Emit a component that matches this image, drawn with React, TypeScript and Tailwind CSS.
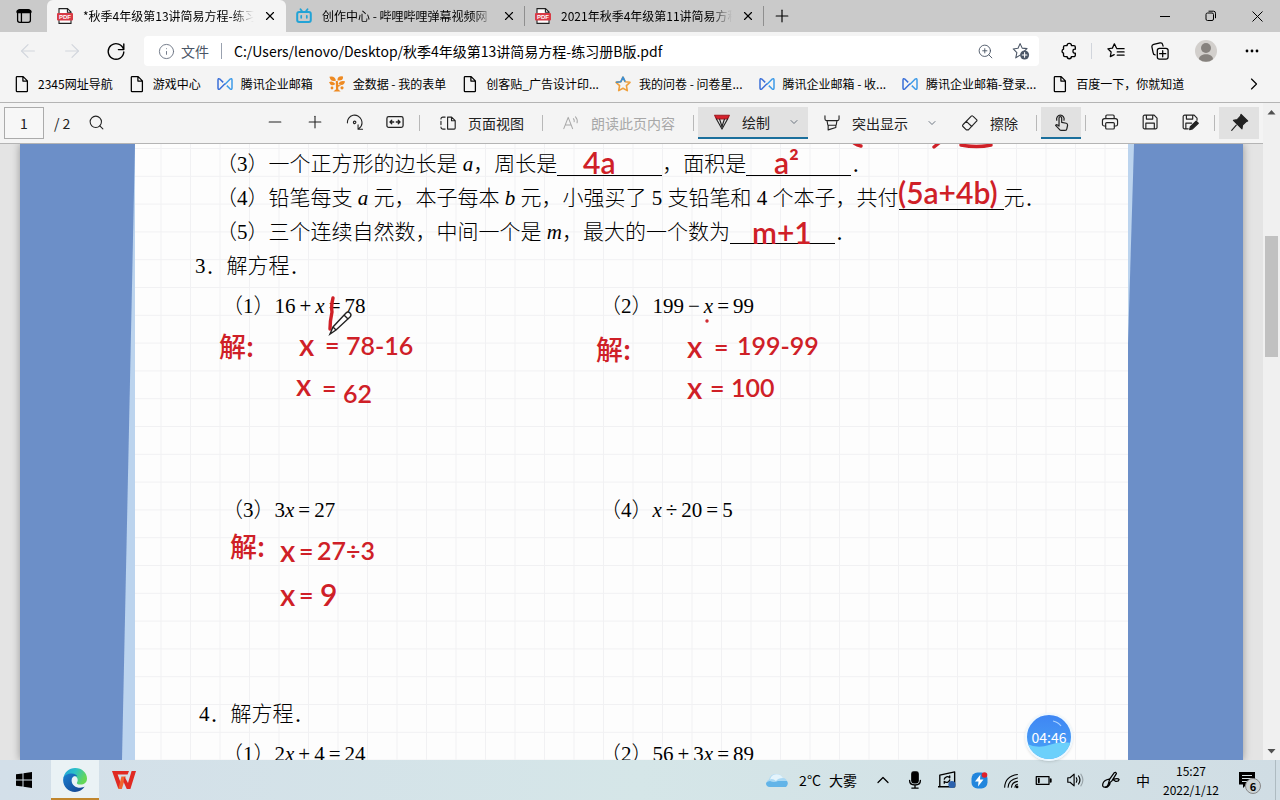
import { ReactNode } from "react";
import {
  ArrowLeft,
  ArrowRight,
  ChevronDown,
  ChevronRight,
  ChevronUp,
  Info,
  Minus,
  Plus,
  Search,
  X,
  ZoomIn,
} from "lucide-react";

type IconProps = { size?: number; className?: string; children?: ReactNode; width?: number };

const Line = ({ size = 18, className = "", width = 1.2, children }: IconProps) => (
  <svg
    width={size}
    height={size}
    viewBox="0 0 20 20"
    fill="none"
    stroke="currentColor"
    strokeWidth={width}
    strokeLinecap="round"
    strokeLinejoin="round"
    className={`shrink-0 ${className}`}
    aria-hidden="true"
  >
    {children}
  </svg>
);

const PdfIcon = () => (
  <svg width="16" height="16" viewBox="0 0 16 16" className="shrink-0" aria-hidden="true">
    <path d="M2 .6h8.5L14 4v11.4H2z" fill="#fff" stroke="#222" strokeWidth="1.1" />
    <path d="M10.4.6V4.2H14" fill="none" stroke="#222" strokeWidth="1.1" />
    <rect x="0" y="5" width="16" height="7.4" rx="1" fill="#d83b46" />
    <text x="8" y="10.9" fontSize="6" fontWeight="700" textAnchor="middle" fill="#fff" fontFamily="Liberation Sans, sans-serif">PDF</text>
  </svg>
);

const BiliIcon = () => (
  <svg width="16" height="16" viewBox="0 0 16 16" className="shrink-0" fill="none" stroke="#22a3d6" strokeLinecap="round" aria-hidden="true">
    <rect x="1.2" y="4" width="13.6" height="10" rx="2" strokeWidth="2" />
    <path d="M4.5 1.2 6 3.2M11.5 1.2 10 3.2" strokeWidth="1.8" />
    <path d="M5.2 7.8v2M10.8 7.8v2" strokeWidth="1.7" />
  </svg>
);

const FileIcon = () => (
  <Line size={18} width={1.4} className="-mx-px">
    <path d="M4.5 1.8h6.8L16 6.5v11.2a.8.8 0 0 1-.8.8H4.5a.8.8 0 0 1-.8-.8V2.6a.8.8 0 0 1 .8-.8ZM11 2v4.8h5" />
  </Line>
);

const TencentIcon = () => (
  <svg width="16" height="16" viewBox="0 0 16 16" className="shrink-0" fill="none" strokeWidth="1.5" strokeLinejoin="round" aria-hidden="true">
    <path d="M8 8.200 13 3.200q2-1.200 2 .8v8q0 2-2 .8L9.800 9.600" stroke="#3e9be8" />
    <path d="M8 7.800 3 12.800q-2 1.200-2-.8V4q0-2 2-.8l3.200 3.200" stroke="#3a6fd8" />
  </svg>
);

const TreeIcon = () => (
  <svg width="16" height="16" viewBox="0 0 16 16" className="shrink-0" fill="#ee8a22" aria-hidden="true">
    <path d="M.4.8Q5.600-.6 7 4.400 1.800 6.600.4.800ZM8.400 4.400Q8.400-.4 14 .4 14.600 5.400 8.400 4.400ZM0 6.200Q3.400 4 6.400 8 2.200 11.200 0 6.200ZM9.400 8Q11 4 16 5.200 15 11 9.400 8ZM6.800 5h2l.4 4 3 .6-3 1.200v2.400l2.400 2.400H4.400l2.600-2.400z" />
    <circle cx="13" cy="11.8" r="1.6" />
    <circle cx="3" cy="12" r="1.4" />
  </svg>
);

const StarIcon = () => (
  <svg width="16" height="16" viewBox="0 0 16 16" className="shrink-0" fill="none" strokeWidth="1.6" strokeLinejoin="round" aria-hidden="true">
    <path d="m8 1.2 2.1 4.5 4.9.6-3.6 3.4.9 4.9L8 12.2l-4.3 2.4.9-4.9L1 6.3l4.9-.6z" stroke="#f0a03c" />
    <path d="m1 6.3 4.9-.6L8 1.2l2.1 4.5" stroke="#3c8fd4" />
  </svg>
);

const RefreshIcon = () => (
  <Line size={20} width={1.4}>
    <path d="M17.6 8.6A7.8 7.8 0 1 0 17.8 11M17.8 3v5.6h-5.4" />
  </Line>
);

const StarAddIcon = () => (
  <Line size={18} className="text-gray-600">
    <path d="m9 1.8 2.3 5 5.4.6-3 2.8M9 14.6 4.2 17.6l1.2-5.9-4-4 5.3-.7L9 1.8" />
    <circle cx="14" cy="14.4" r="5" fill="currentColor" stroke="none" />
    <path d="M14 11.8V17M11.4 14.4h5.2" stroke="#fff" />
  </Line>
);

const PuzzleIcon = () => (
  <Line size={18} width={1.5}>
    <path d="M5.500 4h2.400a2.400 2.400 0 0 1 4.800 0H15.400A1.600 1.600 0 0 1 17 5.600V8q-2.600-.2-2.600 2.200T17 12.400v2.200a1.600 1.600 0 0 1-1.600 1.600h-2.700a2.400 2.400 0 0 1-4.800 0H5.500a1.600 1.600 0 0 1-1.600-1.600v-2.200a2.300 2.300 0 0 1 0-4.400V5.600A1.600 1.600 0 0 1 5.500 4Z" />
  </Line>
);

const FavoritesIcon = () => (
  <Line size={18} width={1.4}>
    <path d="M10.5 6.6 8.2 2 6 6.8l-5 .7 3.6 3.6-.9 5.2L8 14M11 7.4h8M11.4 11h7.6M11.4 14.6h7.6" />
  </Line>
);

const CollectionsIcon = () => (
  <Line size={18} width={1.4}>
    <rect x="7" y="7" width="12" height="12" rx="2.4" />
    <path d="M13 9.6v6.8M9.6 13h6.8M4.6 14.4A2.4 2.4 0 0 1 2.4 12L1 5.4A2.6 2.6 0 0 1 3 2.6L10 1a2.6 2.6 0 0 1 3 2l.4 1.600" />
  </Line>
);

const favorites: { label: string; icon: ReactNode }[] = [
  { label: "2345网址导航", icon: <FileIcon /> },
  { label: "游戏中心", icon: <FileIcon /> },
  { label: "腾讯企业邮箱", icon: <TencentIcon /> },
  { label: "金数据 - 我的表单", icon: <TreeIcon /> },
  { label: "创客贴_广告设计印...", icon: <FileIcon /> },
  { label: "我的问卷 - 问卷星...", icon: <StarIcon /> },
  { label: "腾讯企业邮箱 - 收...", icon: <TencentIcon /> },
  { label: "腾讯企业邮箱-登录...", icon: <TencentIcon /> },
  { label: "百度一下，你就知道", icon: <FileIcon /> },
];

const Tab = ({ title, icon, active = false }: { title: string; icon: ReactNode; active?: boolean }) => (
  <div
    role="tab"
    aria-selected={active}
    className={`relative flex w-[239px] min-w-0 items-center gap-2 pl-2.5 pr-2 ${active ? "rounded-t-md bg-[#f4f4f4]" : ""}`}
  >
    {icon}
    <span className="min-w-0 flex-1 overflow-hidden whitespace-nowrap pl-0.5 text-xs [mask-image:linear-gradient(to_right,black_88%,transparent)]">
      {title}
    </span>
    <button aria-label="关闭" className="flex size-4 items-center justify-center">
      <X size={14} strokeWidth={2} />
    </button>
    {!active && <span className="absolute right-0 top-1.5 h-5 w-px bg-[#8f8f8f]" />}
  </div>
);

const TitleBar = () => (
  <div className="flex h-8 shrink-0 bg-[#cacaca]">
    <button aria-label="标签页操作" className="flex w-[47px] shrink-0 items-center justify-center">
      <Line size={16} width={1.6}>
        <rect x="2" y="2" width="16" height="16" rx="2.6" />
        <path d="M2.4 4.6h15.2" strokeWidth="4" />
        <path d="M6.8 6v12" />
      </Line>
    </button>
    <div role="tablist" className="flex min-w-0">
      <Tab active title="*秋季4年级第13讲简易方程-练习" icon={<PdfIcon />} />
      <Tab title="创作中心 - 哔哩哔哩弹幕视频网" icon={<BiliIcon />} />
      <Tab title="2021年秋季4年级第11讲简易方程" icon={<PdfIcon />} />
    </div>
    <button aria-label="新建标签页" className="flex w-9 items-center justify-center">
      <Plus size={20} strokeWidth={1.4} />
    </button>
    <div className="ml-auto flex">
      <button aria-label="最小化" className="flex w-[46px] items-center justify-center">
        <svg width="10" height="10" stroke="black"><path d="M0 5.5h10" /></svg>
      </button>
      <button aria-label="还原" className="flex w-[46px] items-center justify-center">
        <svg width="12" height="12" fill="none" stroke="black">
          <rect x="1" y="3" width="7.5" height="7.5" rx="1.5" />
          <path d="M3.5 1.2h5a2 2 0 0 1 2 2v5" />
        </svg>
      </button>
      <button aria-label="关闭窗口" className="flex w-[46px] items-center justify-center">
        <svg width="11" height="11" stroke="black"><path d="m.5.5 10 10m0-10-10 10" /></svg>
      </button>
    </div>
  </div>
);

const AddressBar = () => (
  <div className="flex h-[38px] shrink-0 items-center bg-[#f4f4f4] pl-1.5">
    <button aria-label="后退" className="flex w-11 justify-center text-gray-300">
      <ArrowLeft size={22} strokeWidth={1.2} />
    </button>
    <button aria-label="前进" className="flex w-11 justify-center text-gray-300">
      <ArrowRight size={22} strokeWidth={1.2} />
    </button>
    <button aria-label="刷新" className="flex w-11 justify-center">
      <RefreshIcon />
    </button>
    <div className="ml-1.5 flex h-[30px] min-w-0 flex-1 items-center rounded bg-white pl-3.5">
      <Info size={17} strokeWidth={1.3} className="shrink-0 text-gray-500" />
      <label htmlFor="url" className="ml-1.5 shrink-0 text-sm text-gray-600">文件</label>
      <span className="mx-3 h-4 w-px bg-gray-400" />
      <input
        id="url"
        className="min-w-0 flex-1 text-sm outline-none"
        defaultValue="C:/Users/lenovo/Desktop/秋季4年级第13讲简易方程-练习册B版.pdf"
      />
      <button aria-label="缩放" className="flex w-9 justify-center text-gray-600">
        <ZoomIn size={17} strokeWidth={1.3} />
      </button>
      <button aria-label="添加到收藏夹" className="flex w-9 justify-center">
        <StarAddIcon />
      </button>
    </div>
    <div className="flex items-center pl-2">
      <button aria-label="扩展" className="flex w-11 justify-center"><PuzzleIcon /></button>
      <span className="h-4 w-px bg-gray-300" />
      <button aria-label="收藏夹" className="flex w-12 justify-center"><FavoritesIcon /></button>
      <button aria-label="集锦" className="flex w-10 justify-center"><CollectionsIcon /></button>
      <button aria-label="个人资料" className="flex w-[52px] justify-center">
        <svg width="22" height="22" viewBox="0 0 22 22">
          <circle cx="11" cy="11" r="11" fill="#d2cfcc" />
          <circle cx="11" cy="8" r="5" fill="#86827e" />
          <path d="M4 19.2c0-6.6 14-6.6 14 0a11 11 0 0 1-14 0Z" fill="#86827e" />
        </svg>
      </button>
      <button aria-label="更多" className="flex w-10 justify-center">
        <svg width="14" height="4"><circle cx="2" cy="2" r="1.4" /><circle cx="7" cy="2" r="1.4" /><circle cx="12" cy="2" r="1.4" /></svg>
      </button>
      <span className="w-2" />
    </div>
  </div>
);

const FavoritesBar = () => (
  <nav className="flex h-[33px] shrink-0 items-center gap-4 border-b border-[#b4b4b4] bg-[#f4f4f4] pb-1 pl-3.5 pr-4 text-xs">
    {favorites.map((item, index) => (
      <a key={index} href="#" className="flex items-center gap-2 whitespace-nowrap">
        {item.icon}
        {item.label}
      </a>
    ))}
    <button aria-label="更多收藏" className="ml-auto">
      <ChevronRight size={20} strokeWidth={1.4} />
    </button>
  </nav>
);

const Divider = () => <span className="mx-1 h-4 w-px shrink-0 bg-[#b8b8b8]" />;

const IconButton = ({ label, pressed = false, shaded = false, children }: { label: string; pressed?: boolean; shaded?: boolean; children: ReactNode }) => (
  <button
    aria-label={label}
    className={`flex h-8 w-10 shrink-0 items-center justify-center border-b-2 ${pressed ? "border-[#1b6f9c] bg-[#e1e1e1]" : shaded ? "border-[#e1e1e1] bg-[#e1e1e1]" : "border-transparent"}`}
  >
    {children}
  </button>
);

const TextButton = ({ icon, label, disabled = false, split = false }: { icon: ReactNode; label: string; disabled?: boolean; split?: boolean }) => (
  <button
    disabled={disabled}
    className={`flex h-full shrink-0 items-center gap-3 whitespace-nowrap pl-4 text-sm ${split ? "pr-2.5" : "pr-3.5"} ${disabled ? "text-[#a8a8a8]" : ""}`}
  >
    {icon}
    {label}
  </button>
);

const MoreButton = ({ label }: { label: string }) => (
  <button aria-label={label} className="flex h-full w-7 items-center justify-center">
    <ChevronDown size={12} strokeWidth={1.6} className="text-gray-600" />
  </button>
);

const PdfToolbar = () => (
  <div className="flex h-[41px] shrink-0 items-center border-b border-[#b4b4b4] bg-[#f4f4f4] pl-1 pr-1 text-[#222]">
    <input
      aria-label="页码"
      defaultValue="1"
      className="h-8 w-10 border border-[#ababab] bg-[#f7f7f7] text-center text-sm outline-none"
    />
    <span className="ml-2.5 w-[22px] whitespace-nowrap text-sm">/ 2</span>
    <IconButton label="查找">
      <Search size={17} strokeWidth={1.5} />
    </IconButton>
    <div className="ml-auto flex h-8 items-center">
      <IconButton label="缩小"><Minus size={20} strokeWidth={1.3} /></IconButton>
      <IconButton label="放大"><Plus size={20} strokeWidth={1.3} /></IconButton>
      <IconButton label="旋转">
        <Line size={18}>
          <path d="M1.6 11A8 8 0 0 1 17 7.4c1.6 4 .2 7.8-2.8 10M13.4 13.2v4.9h5" />
          <circle cx="9.6" cy="10.4" r="1.4" />
        </Line>
      </IconButton>
      <IconButton label="适应宽度">
        <Line size={18} width={1.4}>
          <rect x="1" y="4" width="18" height="12" rx="2" />
          <path d="M4.6 10h4M6.4 8l-2 2 2 2M15.4 10h-4M13.6 8l2 2-2 2" />
        </Line>
      </IconButton>
      <Divider />
      <TextButton
        label="页面视图"
        icon={
          <Line size={16} width={1.4}>
            <path d="M9.5 2.6h5L19 7v9.4a1.2 1.2 0 0 1-1.2 1.2H9.5zM14.4 2.8V7.2H19" />
            <path d="M6.4 2.6H3.6a2.4 2.4 0 0 0-2.4 2.4M1.2 8v4M1.2 15.2a2.4 2.4 0 0 0 2.4 2.4h2.8" />
          </Line>
        }
      />
      <Divider />
      <TextButton
        disabled
        label="朗读此页内容"
        icon={
          <Line size={16} width={1.3}>
            <path d="M1 17 6.5 3 12 17M3 12.4h7M13 4.6q1.4 1.6 1 3.8M15.6 2.4q3 3 2 7.4" />
          </Line>
        }
      />
      <Divider />
      <div className="flex h-8 border-b-2 border-[#1b6f9c] bg-[#e1e1e1]">
        <TextButton
          split
          label="绘制"
          icon={
            <Line size={16} width={1.4}>
              <path d="M.8 1.600h18.400l-2.200 4.600H3z" fill="#d6202b" stroke="#a01820" />
              <path d="m3 6.200 7 12.600 7-12.600M7 6.600l3 9 3-9" />
            </Line>
          }
        />
        <MoreButton label="画笔选项" />
      </div>
      <div className="flex h-8">
        <TextButton
          split
          label="突出显示"
          icon={
            <Line size={16} width={1.4}>
              <path d="M1.200 1v4q0 2 2 2h13.600q2 0 2-2V1M3.800 7.2l1 5.600h10.400l1-5.600M5.2 12.800v5.800l9.6-3v-2.800" />
            </Line>
          }
        />
        <MoreButton label="荧光笔选项" />
      </div>
      <TextButton
        label="擦除"
        icon={
          <Line size={16} width={1.4}>
            <path d="m1.200 12.200 10.400-10.800q1-1 2 0l4.600 4.400q1 1 0 2L8 18.600H5.400L1.200 14.400q-1-1 0-2.200ZM5.400 8l6.800 6.400" />
          </Line>
        }
      />
      <Divider />
      <IconButton pressed label="触摸绘制">
        <Line size={19} width={1.3}>
          <path d="M7.4 11.4V5.2a1.4 1.4 0 0 1 2.8 0v4.6l4.8 1q1.6.4 1.4 2.2l-.8 3.6q-.4 1.8-2.4 1.8H9.8q-1.2 0-2-1.2L3.8 13q1.2-1.6 3.6.8z" />
          <path d="M5 7.6a4 4 0 1 1 7.6 0" />
        </Line>
      </IconButton>
      <Divider />
      <IconButton label="打印">
        <Line size={18} width={1.3}>
          <path d="M5.4 6.2V3.4A1.2 1.2 0 0 1 6.6 2.2h6.8a1.2 1.2 0 0 1 1.2 1.2v2.8M5.2 14.4H3.6a2 2 0 0 1-2-2V8.6a2.4 2.4 0 0 1 2.4-2.4h12a2.4 2.4 0 0 1 2.4 2.4v3.8a2 2 0 0 1-2 2h-1.6" />
          <rect x="5.2" y="10.6" width="9.6" height="7.2" rx="1.2" />
        </Line>
      </IconButton>
      <IconButton label="保存">
        <Line size={18} width={1.3}>
          <path d="M4 2.4h10.6L17.8 5.6V16a1.6 1.6 0 0 1-1.6 1.6H4A1.6 1.6 0 0 1 2.4 16V4A1.6 1.6 0 0 1 4 2.4ZM6 2.6v4.2h7V2.6M5.4 17.4v-6.2h9.4v6.2" />
        </Line>
      </IconButton>
      <IconButton label="另存为">
        <Line size={18} width={1.3}>
          <path d="M8 17.6H4A1.6 1.6 0 0 1 2.4 16V4A1.6 1.6 0 0 1 4 2.4h10.6L17.8 5.6V8M6 2.6v4.2h7V2.6M5.4 17.4v-6.2h6.4" />
          <path d="m9.6 18.4.8-3.2 6.4-6.2 2.4 2.4-6.4 6.2z" fill="currentColor" />
        </Line>
      </IconButton>
      <Divider />
      <IconButton shaded label="固定工具栏">
        <Line size={19}>
          <path d="m11.6 1.4 7 7-1.8.8-3.600 3.400-.6 4.200L3.600 7.800l4-.8L11 3.400zM6.6 12.800 1.800 18.200" fill="currentColor" />
        </Line>
      </IconButton>
    </div>
  </div>
);

const Var = ({ children }: { children: ReactNode }) => <i>{children}</i>;
const Op = ({ children }: { children: ReactNode }) => <span className="mx-1">{children}</span>;
const Blank = () => <span className="inline-block h-5 w-[105px] border-b border-black align-[-5px]" />;

// Handwritten notes, placed on the sheet in page coordinates
const inkSizes = {
  large: "font-['Lato',sans-serif] text-[30px] font-semibold",
  small: "font-['Lato',sans-serif] text-[25px] font-semibold",
  cjk: "font-['Noto_Sans_CJK_SC',sans-serif] text-[27px] font-medium",
};

const notes: { text: string; x: number; y: number; size: keyof typeof inkSizes }[] = [
  { text: "4a", x: 448, y: 0, size: "large" },
  { text: "a²", x: 639, y: 0, size: "large" },
  { text: "(5a+4b)", x: 763, y: 30, size: "large" },
  { text: "m+1", x: 617, y: 70, size: "large" },
  { text: "解:", x: 84, y: 184, size: "cjk" },
  { text: "x", x: 164, y: 182, size: "large" },
  { text: "=", x: 190, y: 182, size: "small" },
  { text: "78-16", x: 211, y: 183, size: "small" },
  { text: "x", x: 161, y: 222, size: "large" },
  { text: "=", x: 187, y: 225, size: "small" },
  { text: "62", x: 208, y: 231, size: "small" },
  { text: "解:", x: 461, y: 187, size: "cjk" },
  { text: "x", x: 552, y: 184, size: "large" },
  { text: "=", x: 579, y: 184, size: "small" },
  { text: "199-99", x: 602, y: 183, size: "small" },
  { text: "x", x: 552, y: 225, size: "large" },
  { text: "=", x: 575, y: 225, size: "small" },
  { text: "100", x: 596, y: 225, size: "small" },
  { text: "解:", x: 95, y: 384, size: "cjk" },
  { text: "x", x: 145, y: 388, size: "large" },
  { text: "=", x: 164, y: 388, size: "small" },
  { text: "27÷3", x: 182, y: 388, size: "small" },
  { text: "x", x: 145, y: 432, size: "large" },
  { text: "=", x: 164, y: 432, size: "small" },
  { text: "9", x: 185, y: 432, size: "large" },
];

const Ink = () => (
  <div className="pointer-events-none absolute inset-0 text-[#cf2027]">
    {notes.map((note, index) => (
      <span
        key={index}
        style={{ left: note.x, top: note.y }}
        className={`absolute whitespace-nowrap leading-9 ${inkSizes[note.size]}`}
      >
        {note.text}
      </span>
    ))}
    <svg className="absolute left-0 top-0" width="900" height="220" fill="none" stroke="currentColor" strokeWidth="3.4" strokeLinecap="round" aria-hidden="true">
      <path d="M719-1q3 2 7 3M799 3l5-4M826 1q16 3 30 0" />
      <path d="M198 154q-2 8-1 14-2 9-2 17" />
      <circle cx="572" cy="177" r="1" strokeWidth="1.4" />
      <path d="m195 190 3-7 13-14q2-2 4 0t0 4l-14 13zM198 183l3 3M209 171l4 4" fill="#fff" stroke="#222" strokeWidth="1.4" />
    </svg>
  </div>
);

const Sheet = () => (
  <article className="relative min-w-0 flex-1 overflow-hidden bg-[#fdfdfd] pt-[3px] font-['Liberation_Serif','Noto_Sans_CJK_SC',serif] text-[21px] font-light leading-[34px] text-black">
    <svg className="absolute inset-0 h-full w-full" aria-hidden="true">
      <defs>
        <pattern id="grid" x="25.5" y="4" width="29.5" height="27.8" patternUnits="userSpaceOnUse">
          <path d="M0 .5h30M.5 0v28" stroke="#f1f1f3" />
        </pattern>
      </defs>
      <rect width="100%" height="100%" fill="url(#grid)" />
    </svg>
    <div className="relative whitespace-nowrap">
      <div className="pl-[81px]">
        <p>（3）一个正方形的边长是 <Var>a</Var>，周长是<Blank />，面积是<Blank />．</p>
        <p>（4）铅笔每支 <Var>a</Var> 元，本子每本 <Var>b</Var> 元，小强买了 5 支铅笔和 4 个本子，共付<Blank />元．</p>
        <p>（5）三个连续自然数，中间一个是 <Var>m</Var>，最大的一个数为<Blank />．</p>
      </div>
      <h2 className="pl-[60px]">3．解方程．</h2>
      <div className="mt-1.5 grid grid-cols-[378px_1fr] gap-y-[170px] pl-[87px]">
        <p>（1）16<Op>+</Op><Var>x</Var><Op>=</Op>78</p>
        <p>（2）199<Op>−</Op><Var>x</Var><Op>=</Op>99</p>
        <p>（3）3<Var>x</Var><Op>=</Op>27</p>
        <p>（4）<Var>x</Var><Op>÷</Op>20<Op>=</Op>5</p>
      </div>
      <h2 className="mt-[170px] pl-16">4．解方程．</h2>
      <div className="mt-1.5 grid grid-cols-[378px_1fr] pl-[87px]">
        <p>（1）2<Var>x</Var><Op>+</Op>4<Op>=</Op>24</p>
        <p>（2）56<Op>+</Op>3<Var>x</Var><Op>=</Op>89</p>
      </div>
    </div>
    <Ink />
  </article>
);

const Document = () => (
  <main className="flex min-h-0 flex-1 overflow-hidden bg-[#e4e4e4] px-5">
    <div className="flex min-w-0 flex-1 bg-[#6c8fc8] shadow-[0_0_8px_rgba(0,0,0,0.35)]">
      <svg className="h-full w-[115px] shrink-0" viewBox="0 0 115 616" preserveAspectRatio="none" aria-hidden="true">
        <path d="M115 0v616h-13z" fill="#bcd4ee" />
      </svg>
      <Sheet />
      <svg className="h-full w-[115px] shrink-0" viewBox="0 0 115 616" preserveAspectRatio="none" aria-hidden="true">
        <path d="M0 0h6L0 200z" fill="#bcd4ee" />
      </svg>
    </div>
  </main>
);

const ScrollBar = () => (
  <div className="flex w-[17px] shrink-0 flex-col items-center bg-[#f0f0f0] text-[#505050]">
    <svg width="17" height="18" fill="currentColor"><path d="m4.5 11.5 4-4.5 4 4.5z" /></svg>
    <span className="mt-[115px] h-[121px] w-[13px] bg-[#c1c1c1]" />
    <svg className="mt-auto" width="17" height="18" fill="currentColor"><path d="m4.5 7 4 4.5 4-4.5z" /></svg>
  </div>
);

const Timer = () => (
  <div className="absolute bottom-[39px] right-[207px] flex size-12 items-center justify-center overflow-hidden rounded-full border-2 border-[#eef8ff] bg-linear-to-b from-[#3f86f4] to-[#4aa3f5] text-sm text-white shadow">
    <svg className="absolute inset-0" width="44" height="44" viewBox="0 0 44 44" aria-hidden="true">
      <path d="M0 29q11 5 22 1t22-2v16H0z" fill="#6cd0fb" />
      <path d="M26 6q5 1 8 5" fill="none" stroke="#a9d2ff" strokeWidth="1.2" />
    </svg>
    <span className="relative">04:46</span>
  </div>
);

const TaskBar = () => (
  <footer className="flex h-10 shrink-0 items-stretch bg-linear-to-r from-[#d3dfe9] via-[#d5e6e8] to-[#d0dde4] pl-[3px] text-sm">
    <button aria-label="开始" className="flex w-[42px] items-center justify-center">
      <svg width="16" height="16"><path d="M0 2.3 6.5 1.4V7.500H0zM7.5 1.2 16 0v7.5H7.5zM0 8.5h6.5v6.1L0 13.7zM7.5 8.5H16V16l-8.5-1.2z" /></svg>
    </button>
    <button aria-label="浏览器" className="ml-1.5 flex w-12 items-center justify-center border-y-2 border-t-[#eaf2f5] border-b-[#c1862d] bg-[#eaf2f5]">
      <svg width="24" height="24" viewBox="0 0 24 24">
        <defs>
          <linearGradient id="edgeTop" x1="0" y1="0" x2="1" y2=".4">
            <stop offset="0" stopColor="#1f9fdc" />
            <stop offset=".5" stopColor="#2bc0c8" />
            <stop offset="1" stopColor="#66d857" />
          </linearGradient>
          <linearGradient id="edgeLow" x1="0" y1="0" x2="1" y2="1">
            <stop offset="0" stopColor="#1b7fd0" />
            <stop offset="1" stopColor="#123f8c" />
          </linearGradient>
        </defs>
        <path d="M.2 11C1 4.4 6 0 12.2 0 19 0 24 5 24 10.4c0 4-3 6.2-6.4 6.2-3 0-4.2-1.2-3.6-2.2 1.6-2 .8-6.6-4.6-6.6C5.4 7.8 1 9.4.2 11Z" fill="url(#edgeTop)" />
        <path d="M.2 11C1 7 5 5.6 8.6 5.6c3.2 0 5 1.4 5.8 2.8-3-1.2-5.8.4-5.8 4 0 4.2 4 7.4 8.6 7.4 2 0 3.6-.6 4.6-1.2C19.6 22 16 24 12 24 5 24-.6 18 .2 11Z" fill="url(#edgeLow)" />
      </svg>
    </button>
    <button aria-label="办公软件" className="flex w-[50px] items-center justify-center">
      <svg width="24" height="18" viewBox="0 0 24 18">
        <path d="M0 0h17l-1.400 3.600H5.600L9 12.500 6.400 18Z" fill="#e02a22" />
        <path d="M9.400 5.500h4.400L9.800 18H6.400z" fill="#f0642e" />
        <path d="m12.400 5.500 3.600 6.500L19.600 0H24l-5.600 18h-3.600l-3.200-7z" fill="#e02a22" />
      </svg>
    </button>
    <div className="ml-auto flex items-center">
      <button className="flex items-center gap-2 whitespace-nowrap pr-2.5">
        <svg width="24" height="16" viewBox="0 0 24 16">
          <path d="M5 15a4 4 0 0 1-1-7.600 7.600 7.600 0 0 1 14-1.400 4.600 4.600 0 0 1 1 9z" fill="#a9d8f4" />
          <path d="M2 14q-3-4 3-5 4 2 8 0h9q2 3-1 6H5q-2 0-3-1Z" fill="#62b4e8" />
          <path d="M5 7.400A7 7 0 0 1 18 6q-5 0-7 3-3-2.600-6-1.600Z" fill="#e4f4fc" />
        </svg>
        <span className="pl-0.5">2°C</span>
        <span>大雾</span>
      </button>
      <button aria-label="显示隐藏的图标" className="flex w-8 justify-center"><ChevronUp size={20} strokeWidth={1.5} /></button>
      <button aria-label="麦克风" className="flex w-8 justify-center">
        <Line size={18} width={1.5}>
          <rect x="6.5" y="1" width="7" height="12" rx="2" fill="currentColor" />
          <path d="M4 10.5q0 5 6 5t6-5M10 15.5v3.3M6.5 19h7" />
        </Line>
      </button>
      <button aria-label="显示设置" className="flex w-8 justify-center">
        <Line size={18} width={1.5}>
          <path d="M2 4.5 18.5 1v16.5H2zM0 17.5h8" />
          <path d="M7 9a3.5 3.5 0 0 1 6-1.5V5.5M13 10a3.5 3.5 0 0 1-6 1.5v2" />
          <circle cx="15.5" cy="15" r="4" fill="#2b62ad" stroke="none" />
        </Line>
      </button>
      <button aria-label="加速" className="flex w-8 justify-center">
        <svg width="17" height="17" viewBox="0 0 17 17">
          <rect x=".5" y=".5" width="16" height="16" rx="6" fill="#2286dd" />
          <path d="m9.5 2.5-5.5 7h3.5L7 14.5l5.5-7H9z" fill="#fff" />
          <circle cx="13.5" cy="3" r="2.8" fill="#e0202a" />
        </svg>
      </button>
      <button aria-label="网络" className="flex w-8 justify-center">
        <Line size={17} width={1.3}>
          <path d="M2 18Q2.5 5 17 3M6 18Q6.5 9 17 7M10 18q.5-6 7-7M14 18q.3-3 3-3.5" />
          <circle cx="16.5" cy="17.5" r="1" fill="currentColor" />
        </Line>
      </button>
      <button aria-label="电池" className="flex w-8 justify-center">
        <Line size={17} width={1.5}>
          <rect x="1.5" y="5.5" width="15" height="9" />
          <path d="M18.5 8.5v3M4.5 8v4" strokeWidth="2.2" />
        </Line>
      </button>
      <button aria-label="音量" className="flex w-8 justify-center">
        <Line size={18} width={1.3}>
          <path d="M2 7.5h2.5L9 3.5v13l-4.5-4H2zM11.5 7.5q1.5 2.500 0 5M14 5.5q3 4.500 0 9" />
          <path d="M16.5 3.5q4.500 6.500 0 13" stroke="#9aa5aa" />
        </Line>
      </button>
      <button aria-label="手写笔" className="flex w-10 justify-center">
        <Line size={18} width={1.4}>
          <path d="M7 14.5 8.500 9 13.500 2q2-1.500 2.500 1L11 11zM13 9q5-1.500 6 .5-.5 2.500-4 2L12 9.500M8 9q-6 1-7 5t2 4 4-3.500M9 14q-2 5-6 4" />
        </Line>
      </button>
      <button className="w-6 text-center">中</button>
      <div className="flex w-[72px] flex-col items-center text-xs leading-[19px]">
        <time>15:27</time>
        <time>2022/1/12</time>
      </div>
      <button aria-label="通知" className="relative flex w-10 justify-center">
        <svg width="16" height="16"><path d="M0 0h16v12.5h-8.5L4 16v-3.5H0z" /><path d="M3 3.5h10M3 6.5h10M3 9.5h7" stroke="#d6e2e6" /></svg>
        <span className="absolute left-[18px] top-1.5 flex size-4 items-center justify-center rounded-full border border-[#888] bg-[#cbd3d6] text-[11px] font-bold leading-none">6</span>
      </button>
      <span className="ml-2 mr-1 h-10 w-px bg-[#aebbc1]" />
    </div>
  </footer>
);

export default function App() {
  return (
    <div className="relative flex h-screen flex-col overflow-hidden bg-[#f4f4f4] font-['Noto_Sans_CJK_SC',sans-serif] text-black">
      <TitleBar />
      <AddressBar />
      <FavoritesBar />
      <div className="flex min-h-0 flex-1">
        <div className="flex min-w-0 flex-1 flex-col">
          <PdfToolbar />
          <Document />
        </div>
        <ScrollBar />
      </div>
      <TaskBar />
      <Timer />
    </div>
  );
}
